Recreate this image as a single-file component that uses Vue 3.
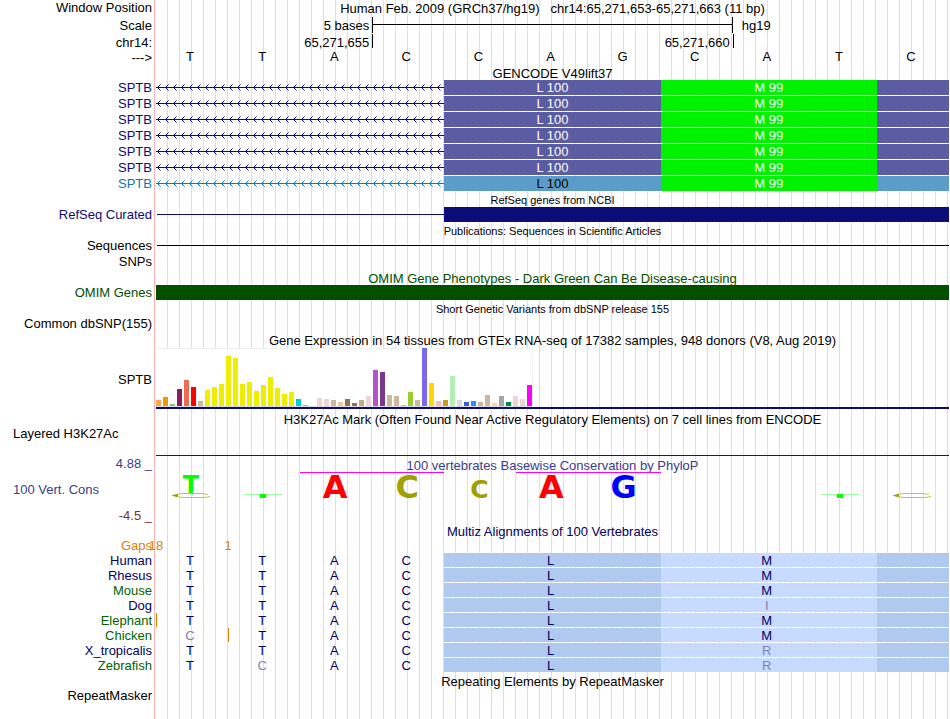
<template>
  <main class="browser">
    <!-- ruler -->
    <div class="row">
      <div class="label">Window Position</div>
      <h1 class="track title">Human Feb. 2009 (GRCh37/hg19)&nbsp;&nbsp; chr14:65,271,653-65,271,663 (11 bp)</h1>
    </div>
    <div class="row scale-row">
      <div class="label">Scale</div>
      <div class="track cells">
        <span class="span3 tick-text">5 bases</span>
        <span class="span5 scale-bar"></span>
        <span class="span3 assembly">hg19</span>
      </div>
    </div>
    <div class="row position-row">
      <div class="label">chr14:</div>
      <div class="track cells ticks">
        <span class="span3 tick-text">65,271,655</span>
        <span class="span5 tick tick-text">65,271,660</span>
        <span class="span3 tick"></span>
      </div>
    </div>
    <div class="row">
      <div class="label">---&gt;</div>
      <div class="track cells letters">
        <span v-for="(b, i) in bases" :key="i">{{ b }}</span>
      </div>
    </div>

    <!-- GENCODE -->
    <h2 class="title inset gencode">GENCODE V49lift37</h2>
    <div v-for="(g, i) in genes" :key="'g' + i" class="row" :class="g">
      <div class="label">SPTB</div>
      <div class="track cells exons">
        <svg class="intron span4" aria-hidden="true">
          <defs>
            <pattern :id="'chev' + i" width="8" height="15" patternUnits="userSpaceOnUse">
              <path d="M0 7.5H8" stroke="currentColor" />
              <path d="M4.5 4.5L1.5 7.5L4.5 10.5" fill="none" stroke="currentColor" />
            </pattern>
          </defs>
          <rect width="100%" height="15" :fill="`url(#chev${i})`" />
        </svg>
        <span class="span3 codon">L 100</span>
        <span class="span3 codon start">M 99</span>
        <span class="codon"></span>
      </div>
    </div>

    <h2 class="title small inset">RefSeq genes from NCBI</h2>
    <div class="row navy">
      <div class="label">RefSeq Curated</div>
      <div class="track cells exons">
        <span class="span4 thin"></span>
        <span class="span7 solid"></span>
      </div>
    </div>

    <h2 class="title small inset">Publications: Sequences in Scientific Articles</h2>
    <div class="row">
      <div class="label">Sequences</div>
      <div class="track exons"><div class="thin"></div></div>
    </div>
    <div class="row">
      <div class="label">SNPs</div>
      <div class="track"></div>
    </div>

    <h2 class="title inset green">OMIM Gene Phenotypes - Dark Green Can Be Disease-causing</h2>
    <div class="row green">
      <div class="label">OMIM Genes</div>
      <div class="track exons"><div class="solid"></div></div>
    </div>

    <h2 class="title small inset">Short Genetic Variants from dbSNP release 155</h2>
    <div class="row">
      <div class="label">Common dbSNP(155)</div>
      <div class="track"></div>
    </div>

    <!-- GTEx -->
    <h2 class="title inset">Gene Expression in 54 tissues from GTEx RNA-seq of 17382 samples, 948 donors (V8, Aug 2019)</h2>
    <div class="row gtex">
      <div class="label">SPTB</div>
      <div class="track">
        <div class="bars">
          <i v-for="(t, i) in tissues" :key="i" :style="{ height: t[1] + 'px', background: t[0] }"></i>
        </div>
      </div>
    </div>

    <h2 class="title inset histone-title">H3K27Ac Mark (Often Found Near Active Regulatory Elements) on 7 cell lines from ENCODE</h2>
    <div class="row histone">
      <div class="label left">Layered H3K27Ac</div>
      <div class="track"></div>
    </div>

    <!-- conservation -->
    <div class="row cons">
      <div class="label cons-label">
        <span class="violet">4.88 _</span>
        <span class="violet left">100 Vert. Cons</span>
        <span class="maroon">-4.5 _</span>
      </div>
      <div class="track">
        <h2 class="title violet cons-title">100 vertebrates Basewise Conservation by PhyloP</h2>
        <div class="cells logo">
          <span v-for="(l, i) in logo" :key="i" :class="[l.cls, { capped: l.cap }]">
            <b v-if="l.ch">{{ l.ch }}</b>
            <svg v-if="l.mark === 'bar'" width="40" height="5" aria-hidden="true">
              <path d="M1 1.5H39" stroke="#a0ffa0" />
              <path d="M17 1H23V5H17Z" fill="#00ff00" />
            </svg>
            <svg v-if="l.mark === 'ring'" width="42" height="5" aria-hidden="true">
              <path d="M38 1.5Q35 .5 30 .5H14Q8 .5 3 2.5Q8 4.5 14 4.5H30Q37 4.5 40 3.5" fill="none" stroke="#c0c050" />
              <path d="M1 2.5L8 1V4Z" fill="#a0a000" />
            </svg>
          </span>
        </div>
      </div>
    </div>

    <!-- multiz -->
    <h2 class="title inset ink multiz-title">Multiz Alignments of 100 Vertebrates</h2>
    <div class="row gaps">
      <div class="label">Gaps</div>
      <div class="track cells">
        <span><em>18</em></span>
        <span><em>1</em></span>
      </div>
    </div>
    <div v-for="s in species" :key="s.name" class="row species">
      <div class="label" :class="s.alt ? 'leaf' : 'ink'">{{ s.name }}</div>
      <div class="track cells letters">
        <span v-for="(b, i) in s.seq" :key="i" :class="{ faint: b !== 'TTAC'[i], insert: s.insert === i }">{{ b }}</span>
        <span class="span3 amino">L</span>
        <span class="span3 amino pale" :class="{ faint: s.aa !== 'M' }">{{ s.aa }}</span>
        <span class="amino"></span>
      </div>
    </div>

    <h2 class="title inset repeat-title">Repeating Elements by RepeatMasker</h2>
    <div class="row">
      <div class="label">RepeatMasker</div>
      <div class="track"></div>
    </div>
  </main>
</template>

<script setup>
const bases = 'TTACCAGCATC'

const genes = ['navy', 'navy', 'navy', 'navy', 'navy', 'navy', 'sky']

const yellow = [16, 19, 22, 50, 48, 22, 24, 15, 21, 29, 18, 12, 14]
const tissues = [
  ['#ffa54f', 6], ['#ee9a00', 9], ['#8fbc8f', 2], ['#8b1c62', 17],
  ['#ee6a50', 26], ['#ff0000', 19], ['#cdb79e', 5],
  ...yellow.map((h) => ['#eeee00', h]),
  ['#00cdcd', 7], ['#ee82ee', 1], ['#9ac0cd', 0], ['#eed5d2', 8],
  ['#eed5d2', 7], ['#cdb79e', 6], ['#eec591', 4], ['#8b7355', 7],
  ['#8b7355', 3], ['#cdaa7d', 6], ['#eed5d2', 10], ['#b452cd', 36],
  ['#7a378b', 34], ['#cdb79e', 11], ['#cdb79e', 10], ['#cdb79e', 1],
  ['#9acd32', 14], ['#cdb79e', 6], ['#7a67ee', 58], ['#ffd700', 23],
  ['#ffb6c1', 5], ['#cd9b1d', 6], ['#b4eeb4', 30], ['#d9d9d9', 6],
  ['#3a5fcd', 4], ['#1e90ff', 5], ['#cdb79e', 4], ['#cdb79e', 11],
  ['#ffd39b', 3], ['#a6a6a6', 10], ['#008b45', 4], ['#eed5d2', 10],
  ['#eed5d2', 7], ['#ff00ff', 21],
]

const logo = [
  { ch: 'T', cls: 'base-t', mark: 'ring' },
  { mark: 'bar' },
  { ch: 'A', cls: 'base-a', cap: true },
  { ch: 'C', cls: 'base-c', cap: true },
  { ch: 'C', cls: 'base-c low' },
  { ch: 'A', cls: 'base-a', cap: true },
  { ch: 'G', cls: 'base-g', cap: true },
  {},
  {},
  { mark: 'bar' },
  { mark: 'ring' },
]

const species = [
  { name: 'Human', seq: 'TTAC', aa: 'M' },
  { name: 'Rhesus', seq: 'TTAC', aa: 'M' },
  { name: 'Mouse', seq: 'TTAC', aa: 'M', alt: true },
  { name: 'Dog', seq: 'TTAC', aa: 'I' },
  { name: 'Elephant', seq: 'TTAC', aa: 'M', alt: true, insert: 0 },
  { name: 'Chicken', seq: 'CTAC', aa: 'M', alt: true, insert: 1 },
  { name: 'X_tropicalis', seq: 'TTAC', aa: 'R' },
  { name: 'Zebrafish', seq: 'TCAC', aa: 'R', alt: true },
]
</script>

<style>
body {
  margin: 0;
  background: #fff;
}
</style>

<style scoped>
.browser {
  min-height: 100vh;
  box-sizing: border-box;
  padding-right: 1px;
  font: 13px/16px "Liberation Sans", Arial, sans-serif;
  color: #000;
  background:
    linear-gradient(to right, #fff 154px, #ffb0b0 154px 155px, #fff 155px 156px, transparent 156px),
    repeating-linear-gradient(to right, transparent 0 11px, #dcdcf5 11px 12px);
}
.row {
  display: flex;
  height: 16px;
}
.label {
  flex: 0 0 152px;
  margin-right: 4px;
  text-align: right;
  white-space: nowrap;
}
.left {
  box-sizing: border-box;
  padding-left: 13px;
  text-align: left;
}
.track {
  flex: 1;
  min-width: 0;
}
.title {
  height: 15px;
  margin: 0;
  font-size: 13px;
  font-weight: normal;
  line-height: 17px;
  text-align: center;
  white-space: nowrap;
}
.inset {
  margin-left: 156px;
}
.small {
  font-size: 11px;
}
.gencode {
  height: 14px;
  line-height: 16px;
}
.cells {
  display: grid;
  grid-template-columns: repeat(11, minmax(0, 1fr));
  grid-template-rows: 100%;
}
.span3 { grid-column: span 3; }
.span4 { grid-column: span 4; }
.span5 { grid-column: span 5; }
.span7 { grid-column: span 7; }

.navy { color: #0c0c78; }
.sky { color: #0c78b4; }
.green { color: #005000; }
.violet { color: #3c3c8c; }
.maroon { color: #783232; }
.ink { color: #000064; }
.leaf { color: #006400; }

/* ruler */
.scale-row {
  height: 18px;
  line-height: 19px;
}
.position-row {
  line-height: 18px;
}
.tick-text {
  padding-right: 3px;
  text-align: right;
}
.scale-bar {
  margin: 1px 0;
  border: solid #000;
  border-width: 0 1px;
  background: linear-gradient(#000, #000) 0 7px / 100% 1px no-repeat;
}
.assembly {
  padding-left: 9px;
}
.ticks {
  height: 14px;
}
.tick {
  border-left: 1px solid #000;
}
.letters {
  line-height: 14px;
}
.letters span {
  padding-right: 4px;
  text-align: center;
}

/* gene models */
.exons {
  height: 15px;
}
.intron {
  width: 100%;
  height: 15px;
}
.codon {
  background: #5c5ca3;
  color: #fff;
  line-height: 16px;
  text-align: center;
}
.sky .codon {
  background: #5c9cc8;
  color: #000;
}
.codon.start,
.sky .codon.start {
  background: #00f200;
  color: #fff;
}
.thin {
  height: 15px;
  margin-left: 1px;
  background: linear-gradient(currentColor, currentColor) 0 7px / 100% 1px no-repeat;
}
.solid {
  height: 15px;
  background: currentColor;
}

/* expression */
.gtex {
  height: 62px;
}
.gtex .label {
  line-height: 66px;
}
.gtex .track {
  border-bottom: 2px solid #0c0c78;
}
.bars {
  box-sizing: border-box;
  display: inline-flex;
  align-items: flex-end;
  gap: 2px;
  height: 59px;
  margin-top: 1px;
  padding-right: 1px;
  vertical-align: top;
  background: #fff;
  box-shadow: inset 0 1px #f0f0f0, inset -1px 0 #f0f0f0;
  border-bottom: 1px solid #dcdcdc;
}
.bars i {
  width: 5px;
}
.histone-title {
  height: 21px;
  line-height: 21px;
}
.histone {
  height: 26px;
}
.histone .label {
  line-height: 8px;
}
.histone .track {
  border-bottom: 1px solid #0c1e5a;
}

/* conservation */
.cons {
  height: 68px;
}
.cons-label {
  display: flex;
  flex-direction: column;
  justify-content: space-between;
}
.cons-title {
  height: 16px;
  line-height: 20px;
}
.logo span {
  box-sizing: border-box;
  display: flex;
  flex-direction: column;
  align-items: center;
  justify-content: flex-end;
  height: 26px;
  padding-right: 2px;
}
.logo b {
  height: 23px;
  font: bold 32px/24px "DejaVu Sans", sans-serif;
}
.logo .capped {
  border-top: 1px solid #ff00ff;
}
.logo .base-a { color: #ff0000; }
.logo .base-c { color: #a0a000; }
.logo .base-g { color: #0000ff; }
.logo .base-t { color: #00ff00; }
.logo .base-t b {
  height: 17px;
  font-size: 24px;
  line-height: 18px;
}
.logo .low b {
  height: 18px;
  font-size: 25px;
  line-height: 19px;
}

/* alignments */
.multiz-title {
  height: 16px;
  line-height: 16px;
}
.gaps {
  height: 13px;
  line-height: 12px;
  color: #dc8200;
}
.gaps span {
  position: relative;
}
/* counts sit on the boundary before their base */
.gaps em {
  position: absolute;
  left: -10px;
  width: 20px;
  font-style: normal;
  text-align: center;
}
.species {
  height: 15px;
  line-height: 15px;
}
.species .letters {
  height: 14px;
  line-height: 15px;
  color: #000064;
}
.letters .faint {
  color: #8080b4;
}
.letters .insert {
  box-shadow: inset 1px 0 #dc8200;
}
.species .amino {
  background: #b0caef;
}
.species .pale {
  background: #c6dbff;
}
.repeat-title {
  line-height: 18px;
}
</style>
